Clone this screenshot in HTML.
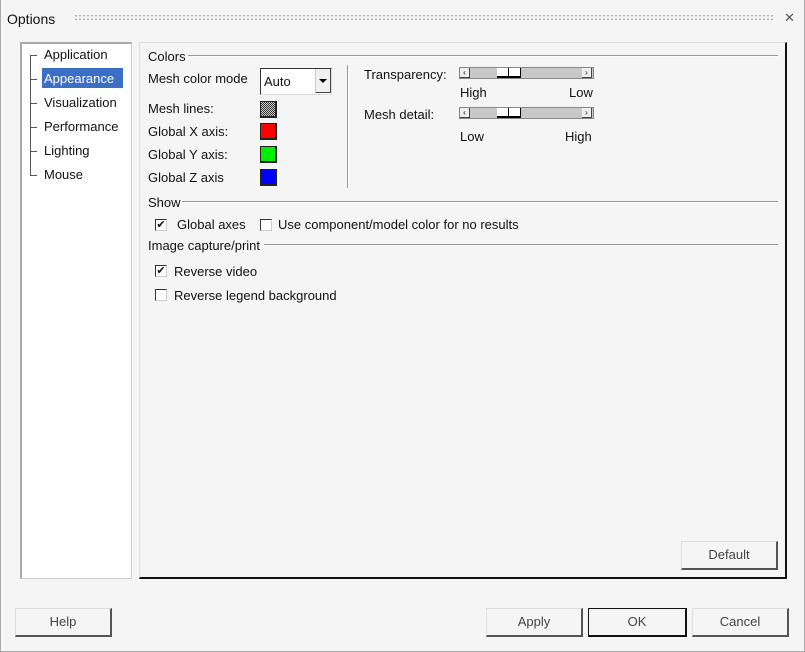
<!DOCTYPE html>
<html><head><style>
*{box-sizing:border-box;margin:0;padding:0}
body{width:805px;height:652px;background:#f5f5f5;font-family:"Liberation Sans",sans-serif;font-size:13px;color:#111;position:relative;overflow:hidden}
.a{position:absolute;white-space:nowrap}
.btn{position:absolute;height:29px;background:#f5f5f5;border:1px solid #ddd;border-right:2px solid #555;border-bottom:2px solid #555;text-align:center;line-height:26px;color:#444;font-size:13px}
.sw{position:absolute;width:17px;height:17px;border:1px solid #222;border-right:2px solid #222;border-bottom:2px solid #222}
.cb{position:absolute;width:12px;height:12px;border:1px solid #333;border-right:1px solid #ccc;border-bottom:1px solid #ccc;background:#fff;font-size:11px;line-height:10px;text-align:center}
.hr{position:absolute;height:2px;border-top:1px solid #999;border-bottom:1px solid #fff}
.sl{position:absolute;width:135px;height:12px;background:#c8c8c8;border:1px solid #888}
.tl{position:absolute;width:7px;border-top:1px solid #555;}
</style></head><body>
<div class="a" style="left:0;top:0;width:805px;height:652px;border:1px solid #aaa;border-top:none"></div>
<div class="a" style="left:7px;top:11px;font-size:14px">Options</div>
<div class="a" style="left:74px;top:14px;width:700px;height:7px;background-image:radial-gradient(circle,#aaa 0.8px,transparent 1px);background-size:4px 3.5px"></div>
<div class="a" style="left:784px;top:10px;font-size:13px;color:#555">✕</div>

<div class="a" style="left:20px;top:42px;width:112px;height:537px;background:#fff;border:1px solid #ccc;border-left:2px solid #aaa;border-top:2px solid #aaa"></div>
<div class="a" style="left:30px;top:55px;height:120px;border-left:1px solid #555"></div>
<div class="tl" style="left:30px;top:55px"></div><div class="tl" style="left:30px;top:79px"></div><div class="tl" style="left:30px;top:103px"></div><div class="tl" style="left:30px;top:127px"></div><div class="tl" style="left:30px;top:151px"></div><div class="tl" style="left:30px;top:175px"></div>
<div class="a" style="left:44px;top:47px">Application</div>
<div class="a" style="left:42px;top:68px;width:81px;height:20px;background:#3a6fc5"></div>
<div class="a" style="left:44px;top:71px;color:#fff">Appearance</div>
<div class="a" style="left:44px;top:95px">Visualization</div>
<div class="a" style="left:44px;top:119px">Performance</div>
<div class="a" style="left:44px;top:143px">Lighting</div>
<div class="a" style="left:44px;top:167px">Mouse</div>

<div class="a" style="left:139px;top:42px;width:648px;height:537px;border:1px solid #ddd;border-right:2px solid #111;border-bottom:2px solid #111"></div>

<div class="a" style="left:148px;top:49px">Colors</div>
<div class="hr" style="left:188px;top:55px;width:590px"></div>
<div class="a" style="left:148px;top:71px">Mesh color mode</div>
<div class="a" style="left:260px;top:68px;width:72px;height:27px;border:1px solid #333;border-right:1px solid #ddd;border-bottom:1px solid #ddd;background:#fff"></div>
<div class="a" style="left:264px;top:74px">Auto</div>
<div class="a" style="left:315px;top:69px;width:16px;height:24px;background:#f0f0f0;border-left:1px solid #ccc;border-right:1px solid #444;border-bottom:1px solid #444"></div>
<div class="a" style="left:319px;top:79px;width:0;height:0;border-left:4px solid transparent;border-right:4px solid transparent;border-top:4px solid #000"></div>
<div class="a" style="left:148px;top:101px">Mesh lines:</div>
<div class="sw" style="left:260px;top:101px;background:repeating-conic-gradient(#333 0 25%,#ccc 0 50%) 0 0/2px 2px"></div>
<div class="a" style="left:148px;top:124px">Global X axis:</div>
<div class="sw" style="left:260px;top:123px;background:#f00"></div>
<div class="a" style="left:148px;top:147px">Global Y axis:</div>
<div class="sw" style="left:260px;top:146px;background:#0e0"></div>
<div class="a" style="left:148px;top:170px">Global Z axis</div>
<div class="sw" style="left:260px;top:169px;background:#00f"></div>
<div class="a" style="left:347px;top:65px;height:123px;border-left:1px solid #999;border-right:1px solid #fff;width:2px"></div>

<div class="a" style="left:364px;top:67px">Transparency:</div>
<div class="sl" style="left:459px;top:67px"></div>
<div class="a" style="left:460px;top:68px;width:10px;height:10px;background:#eee;border-right:1px solid #444;border-bottom:1px solid #444;font-size:8px;line-height:9px;text-align:center">‹</div>
<div class="a" style="left:582px;top:68px;width:10px;height:10px;background:#eee;border-right:1px solid #444;border-bottom:1px solid #444;font-size:8px;line-height:9px;text-align:center">›</div>
<div class="a" style="left:497px;top:68px;width:24px;height:10px;background:#fff;border-bottom:2px solid #000;border-right:1px solid #000"><div style="position:absolute;left:11px;top:0;height:9px;border-left:1px solid #000"></div></div>
<div class="a" style="left:460px;top:85px">High</div><div class="a" style="left:569px;top:85px">Low</div>
<div class="a" style="left:364px;top:107px">Mesh detail:</div>
<div class="sl" style="left:459px;top:107px"></div>
<div class="a" style="left:460px;top:108px;width:10px;height:10px;background:#eee;border-right:1px solid #444;border-bottom:1px solid #444;font-size:8px;line-height:9px;text-align:center">‹</div>
<div class="a" style="left:582px;top:108px;width:10px;height:10px;background:#eee;border-right:1px solid #444;border-bottom:1px solid #444;font-size:8px;line-height:9px;text-align:center">›</div>
<div class="a" style="left:497px;top:108px;width:24px;height:10px;background:#fff;border-bottom:2px solid #000;border-right:1px solid #000"><div style="position:absolute;left:11px;top:0;height:9px;border-left:1px solid #000"></div></div>
<div class="a" style="left:460px;top:129px">Low</div><div class="a" style="left:565px;top:129px">High</div>

<div class="a" style="left:148px;top:195px">Show</div>
<div class="hr" style="left:182px;top:201px;width:596px"></div>
<div class="cb" style="left:155px;top:219px">✔</div>
<div class="a" style="left:177px;top:217px">Global axes</div>
<div class="cb" style="left:260px;top:219px"></div>
<div class="a" style="left:278px;top:217px">Use component/model color for no results</div>
<div class="a" style="left:148px;top:238px">Image capture/print</div>
<div class="hr" style="left:264px;top:244px;width:514px"></div>
<div class="cb" style="left:155px;top:265px">✔</div>
<div class="a" style="left:174px;top:264px">Reverse video</div>
<div class="cb" style="left:155px;top:289px"></div>
<div class="a" style="left:174px;top:288px">Reverse legend background</div>

<div class="btn" style="left:681px;top:541px;width:97px">Default</div>
<div class="btn" style="left:15px;top:608px;width:97px">Help</div>
<div class="btn" style="left:486px;top:608px;width:97px">Apply</div>
<div class="btn" style="left:588px;top:608px;width:99px;border:1px solid #111;border-right:2px solid #111;border-bottom:2px solid #111">OK</div>
<div class="btn" style="left:692px;top:608px;width:97px">Cancel</div>
</body></html>
